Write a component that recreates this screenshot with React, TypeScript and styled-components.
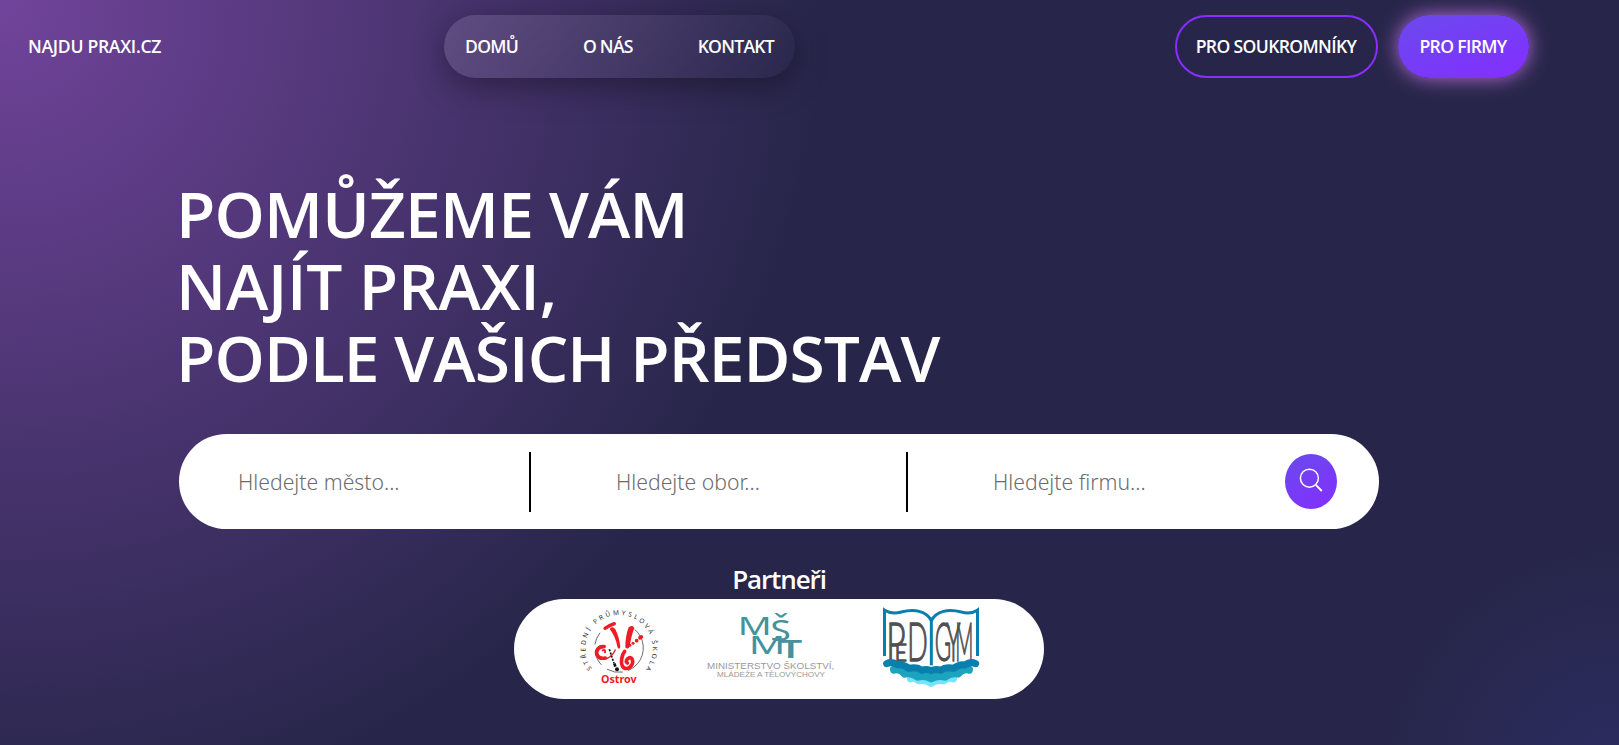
import React from 'react';
import styled, { createGlobalStyle } from 'styled-components';

const GlobalStyle = createGlobalStyle`
  *, *::before, *::after { box-sizing: border-box; }
  body {
    margin: 0;
    background: #27264a;
    color: #fff;
    font-family: 'Open Sans', 'Noto Sans', sans-serif;
    overflow: hidden;
  }
`;

const Page = styled.div`
  display: flex;
  flex-direction: column;
  height: 100vh;
  min-height: 745px;
  background:
    radial-gradient(circle at 100% 105%, #2b2d61 0, rgba(39, 38, 74, 0) 235px),
    radial-gradient(circle at 0 0, #71449b 0, #27264a 825px);
`;

const Header = styled.header`
  display: flex;
  align-items: center;
  height: 93px;
  padding: 0 90px 0 28px;
  font-size: 17.6px;
  font-weight: 600;
  line-height: 24px;
`;

const Brand = styled.a`
  width: 416px;
  padding-bottom: 2px;
  letter-spacing: -0.3px;
  white-space: nowrap;
`;

const Nav = styled.nav`
  display: flex;
  align-items: center;
  justify-content: space-between;
  width: 351px;
  height: 63px;
  padding: 0 21px 2px 21px;
  border-radius: 32px;
  background: linear-gradient(135deg, rgba(255, 255, 255, 0.12), rgba(255, 255, 255, 0));
  box-shadow: 0 8px 32px rgba(0, 0, 0, 0.36);
`;

const NavLink = styled.a`
  letter-spacing: -0.75px;
  white-space: nowrap;
`;

const Actions = styled.div`
  display: flex;
  gap: 20px;
  margin-left: auto;
`;

const ActionButton = styled.button<{ $filled?: boolean }>`
  width: ${(p) => (p.$filled ? 131 : 203)}px;
  height: 63px;
  padding: 0 1px 2px 0;
  border: 2px solid;
  border-color: ${(p) => (p.$filled ? 'transparent' : '#8a2eff')};
  border-radius: 32px;
  background: ${(p) => (p.$filled ? 'linear-gradient(160deg, #6a4aec, #842eff) border-box' : 'transparent')};
  box-shadow: ${(p) => (p.$filled ? '0 0 20px rgba(200, 115, 230, 0.9)' : 'none')};
  color: #fff;
  font: inherit;
  letter-spacing: -0.65px;
  white-space: nowrap;
`;

const Main = styled.main`
  display: flex;
  flex-direction: column;
  width: 1200px;
  margin: 85px 0 0 179px;
`;

const Title = styled.h1`
  margin: 0;
  font-size: 64px;
  font-weight: 600;
  line-height: 72px;
`;

const TitleLine = styled.span<{ $tracking: number }>`
  display: block;
  margin-left: -3px;
  letter-spacing: ${(p) => p.$tracking}px;
  white-space: nowrap;
`;

const SearchBar = styled.form`
  display: flex;
  align-items: center;
  height: 95px;
  margin-top: 40px;
  padding: 0 42px 0 0;
  border-radius: 48px;
  background: #fff;
`;

const SearchField = styled.input<{ $last?: boolean }>`
  width: ${(p) => (p.$last ? 290 : 377)}px;
  height: 60px;
  padding: 0 0 0 85px;
  border: 0;
  border-right: ${(p) => (p.$last ? '0' : '2px solid #000')};
  background: transparent;
  color: #222;
  font: 300 21.2px 'Noto Sans', sans-serif;
  outline: none;

  &:first-child { width: 352px; padding-left: 59px; }
  &::placeholder { color: #6c6c6c; opacity: 1; }
`;

const SearchButton = styled.button`
  display: flex;
  align-items: center;
  justify-content: center;
  width: 52px;
  height: 55px;
  margin-left: auto;
  padding: 0 0 3px;
  border: 0;
  border-radius: 50%;
  background: linear-gradient(150deg, #6a4aec, #842eff);
`;

const Partners = styled.section`
  display: flex;
  flex-direction: column;
  align-items: center;
  margin-top: 30px;
`;

const PartnersTitle = styled.h2`
  margin: 0;
  font-size: 26px;
  font-weight: 600;
  line-height: 40px;
  letter-spacing: -1.1px;
`;

const PartnersCard = styled.div`
  display: flex;
  align-items: flex-start;
  width: 530px;
  height: 100px;
  padding: 7px 0 0 65px;
  border-radius: 50px;
  background: #fff;
`;

const SchoolMark = styled.svg`
  width: 82px;
  height: 78px;
  margin-top: 2px;
  flex: none;
`;

const MinistryMark = styled.svg`
  width: 128px;
  height: 62px;
  margin: 9px 0 0 46px;
  flex: none;
  overflow: visible;
`;

const BookMark = styled.svg`
  width: 98px;
  height: 82px;
  margin-left: 47px;
  flex: none;
`;

const SearchIcon = () => (
  <svg width="24" height="24" viewBox="0 0 24 24" fill="none" stroke="#fff" strokeWidth="1.5">
    <circle cx="10.4" cy="10.2" r="9" />
    <path d="M16.8 16.8 L22.8 23" strokeWidth="1.9" />
  </svg>
);

const SchoolLogo = () => (
  <SchoolMark viewBox="27 24 246 234">
    <defs>
      <path id="ring" d="M66 206 A101 101 0 1 1 228 206" />
    </defs>
    <text fill="#2b2b2b" fontSize="19.5" fontFamily="Noto Sans, sans-serif">
      <textPath href="#ring" textLength="448" lengthAdjust="spacing">STŘEDNÍ PRŮMYSLOVÁ ŠKOLA</textPath>
    </text>
    <circle cx="147" cy="144" r="73" fill="none" stroke="#333" strokeWidth="2" strokeDasharray="150 16 48 22 24 42 38 119" transform="rotate(-50 147 144)" />
    <g fill="none" stroke="#ee1c25" strokeLinecap="round" strokeLinejoin="round">
      <path d="M105 85 Q118 76 133 71" strokeWidth="10" />
      <path d="M106 139 C86 132 73 150 78 166 C84 181 108 180 120 170 Q132 160 136 150" strokeWidth="4" />
      <path d="M102 140 C84 139 75 155 83 168 Q90 177 106 174" strokeWidth="11" />
      <path d="M98 151 Q107 147 105 157" strokeWidth="6" />
      <path d="M164 154 C154 166 152 188 157 198 C163 209 178 208 186 194 C192 182 185 171 178 173 C169 176 166 187 172 189" strokeWidth="11" />
    </g>
    <g fill="#ee1c25">
      <path d="M119 87 Q127 76 136 88 Q148 112 151 141 Q147 152 142 140 Q137 110 119 87Z" />
      <path d="M176 82 Q189 73 193 84 Q184 106 179 140 Q172 150 166 142 Q166 108 176 82Z" />
      <circle cx="180" cy="136" r="4" />
      <circle cx="189" cy="130" r="4.5" />
      <circle cx="200" cy="122" r="5.5" />
      <ellipse cx="212" cy="112" rx="8" ry="6" transform="rotate(-30 212 112)" />
    </g>
    <g stroke="#111" fill="none">
      <path d="M118 148 L132 190" strokeWidth="5" strokeDasharray="6 4" />
      <path d="M133 190 L136 200" strokeWidth="8" />
    </g>
    <circle cx="141" cy="208" r="6" fill="#111" />
    <text x="93" y="249" textLength="107" lengthAdjust="spacingAndGlyphs" fill="#ee1c25" fontSize="29" fontWeight="700" fontFamily="Noto Sans, sans-serif">Ostrov</text>
  </SchoolMark>
);

const MinistryLogo = () => (
  <MinistryMark viewBox="21 30 384 186">
    <g fill="#45929c" fontFamily="Noto Sans, sans-serif" fontWeight="400">
      <text x="113" y="90" fontSize="76" textLength="102" lengthAdjust="spacingAndGlyphs">M</text>
      <text x="211" y="108" fontSize="88" textLength="62" lengthAdjust="spacingAndGlyphs">Š</text>
      <text x="146" y="147" fontSize="76" textLength="110" lengthAdjust="spacingAndGlyphs">M</text>
      <text x="238" y="160" fontSize="73" fontWeight="600" textLength="69" lengthAdjust="spacingAndGlyphs">T</text>
    </g>
    <g fill="#999" fontFamily="Liberation Sans, sans-serif">
      <text x="21" y="192" fontSize="25" textLength="382" lengthAdjust="spacingAndGlyphs">MINISTERSTVO ŠKOLSTVÍ,</text>
      <text x="51" y="216" fontSize="22" textLength="324" lengthAdjust="spacingAndGlyphs">MLÁDEŽE A TĚLOVÝCHOVY</text>
    </g>
  </MinistryMark>
);

const BookLogo = () => (
  <BookMark viewBox="36 18 294 246">
    <g fill="none" stroke="#087fac" strokeWidth="9">
      <path d="M43.5 168 V31 Q65 44 94 36 C132 26 169 32 184 62 C199 32 236 26 274 36 Q302 44 322.5 31 V168" />
      <path d="M184 56 V196" />
    </g>
    <g fill="#087fac">
      <path d="M39 22 L54 34 L39 40Z" />
      <path d="M327 22 L312 34 L327 40Z" />
    </g>
    <g fill="#505052" stroke="#505052" strokeWidth="4" strokeLinejoin="round" fontFamily="Lato, sans-serif" fontWeight="300">
      <text transform="translate(49 184) scale(.62 1)" fontSize="162">P</text>
      <text transform="translate(74 184) scale(.88 1)" fontSize="72">E</text>
      <text transform="translate(112 184) scale(.5 1)" fontSize="162">D</text>
      <text transform="translate(194 184) scale(.42 1)" fontSize="160">G</text>
      <text transform="translate(229 184) scale(.45 1)" fontSize="160">Y</text>
      <text transform="translate(256 184) scale(.37 1)" fontSize="162">M</text>
    </g>
    <g fill="none" strokeLinecap="round" strokeLinejoin="round">
      <path d="M121 237 Q134 231 146 243 Q166 238 184 251 Q202 238 222 243 Q234 231 251 237" stroke="#76e5fb" strokeWidth="20" />
      <path d="M72 209 Q91 204 104 221 Q126 216 143 230 Q165 224 184 235 Q203 224 225 230 Q242 216 264 221 Q277 204 297 209" stroke="#1ca3bd" strokeWidth="24" />
      <path d="M50 191 Q67 183 83 195 Q100 191 116 205 Q140 199 156 211 Q171 205 184 212 Q197 205 212 211 Q228 199 252 205 Q268 191 285 195 Q301 183 317 191" stroke="#087fac" strokeWidth="21" />
    </g>
  </BookMark>
);

export default function App() {
  return (
    <>
      <GlobalStyle />
      <Page>
        <Header>
          <Brand>NAJDU PRAXI.CZ</Brand>
          <Nav>
            <NavLink>DOMŮ</NavLink>
            <NavLink>O NÁS</NavLink>
            <NavLink>KONTAKT</NavLink>
          </Nav>
          <Actions>
            <ActionButton>PRO SOUKROMNÍKY</ActionButton>
            <ActionButton $filled>PRO FIRMY</ActionButton>
          </Actions>
        </Header>
        <Main>
          <Title>
            <TitleLine $tracking={-0.8}>POMŮŽEME VÁM</TitleLine>
            <TitleLine $tracking={-0.2}>NAJÍT PRAXI,</TitleLine>
            <TitleLine $tracking={-0.9}>PODLE VAŠICH PŘEDSTAV</TitleLine>
          </Title>
          <SearchBar>
            <SearchField placeholder="Hledejte město..." />
            <SearchField placeholder="Hledejte obor..." />
            <SearchField $last placeholder="Hledejte firmu..." />
            <SearchButton type="button" aria-label="Hledat">
              <SearchIcon />
            </SearchButton>
          </SearchBar>
          <Partners>
            <PartnersTitle>Partneři</PartnersTitle>
            <PartnersCard>
              <SchoolLogo />
              <MinistryLogo />
              <BookLogo />
            </PartnersCard>
          </Partners>
        </Main>
      </Page>
    </>
  );
}
